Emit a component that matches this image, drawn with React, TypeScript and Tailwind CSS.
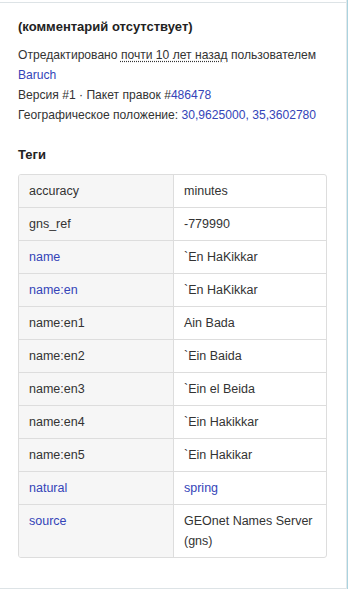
import React from "react";

const L = "text-[#3444b8]";

const rows: { k: string; v: React.ReactNode; kl?: boolean; vl?: boolean }[] = [
  { k: "accuracy", v: "minutes" },
  { k: "gns_ref", v: "-779990" },
  { k: "name", v: "`En HaKikkar", kl: true },
  { k: "name:en", v: "`En HaKikkar", kl: true },
  { k: "name:en1", v: "Ain Bada" },
  { k: "name:en2", v: "`Ein Baida" },
  { k: "name:en3", v: "`Ein el Beida" },
  { k: "name:en4", v: "`Ein Hakikkar" },
  { k: "name:en5", v: "`Ein Hakikar" },
  { k: "natural", v: "spring", kl: true, vl: true },
  {
    k: "source",
    v: (
      <>
        <span className="whitespace-nowrap">GEOnet Names Server</span>
        <br />
        (gns)
      </>
    ),
    kl: true,
  },
];

export default function App() {
  return (
    <div
      className="w-[349px] h-[589px] bg-white flex overflow-hidden text-[#333] text-[12.5px] leading-[20px]"
      style={{ fontFamily: '"Liberation Sans", Arial, sans-serif' }}
    >
      <div className="w-[347px] h-[589px] flex flex-col pt-[2px] border-r border-[#e4e8ea]">
        <div className="flex-1 border-t border-b border-[#dde3e6] px-[18px] pt-[14px]">
          <div className="font-bold text-[13px] text-[#222]">(комментарий отсутствует)</div>
          <div className="text-[12.1px]">
            <div className="mt-[8px] whitespace-nowrap">
              Отредактировано{" "}
              <span className="underline decoration-dotted underline-offset-2">почти 10 лет назад</span>{" "}
              пользователем
            </div>
            <div>
              <span className={L}>Baruch</span>
            </div>
            <div>
              Версия #1 · Пакет правок #<span className={L}>486478</span>
            </div>
            <div className="whitespace-nowrap">
              Географическое положение: <span className={L}>30,9625000, 35,3602780</span>
            </div>
          </div>
          <div className="font-bold text-[13px] text-[#222] mt-[20px]">Теги</div>
          <div className="mt-[9px] w-[309px] border border-[#dddddd] rounded-[3px] overflow-hidden">
            {rows.map((r, i) => (
              <div key={r.k} className={"flex " + (i > 0 ? "border-t border-[#dddddd]" : "")}>
                <div className={"w-[155px] bg-[#f6f6f6] border-r border-[#dddddd] px-[10px] py-[6px] " + (r.kl ? L : "")}>
                  {r.k}
                </div>
                <div className={"flex-1 px-[10px] py-[6px] " + (r.vl ? L : "")}>{r.v}</div>
              </div>
            ))}
          </div>
        </div>
      </div>
      <div className="w-[1px] h-[589px] bg-[#aad3df]" />
    </div>
  );
}
